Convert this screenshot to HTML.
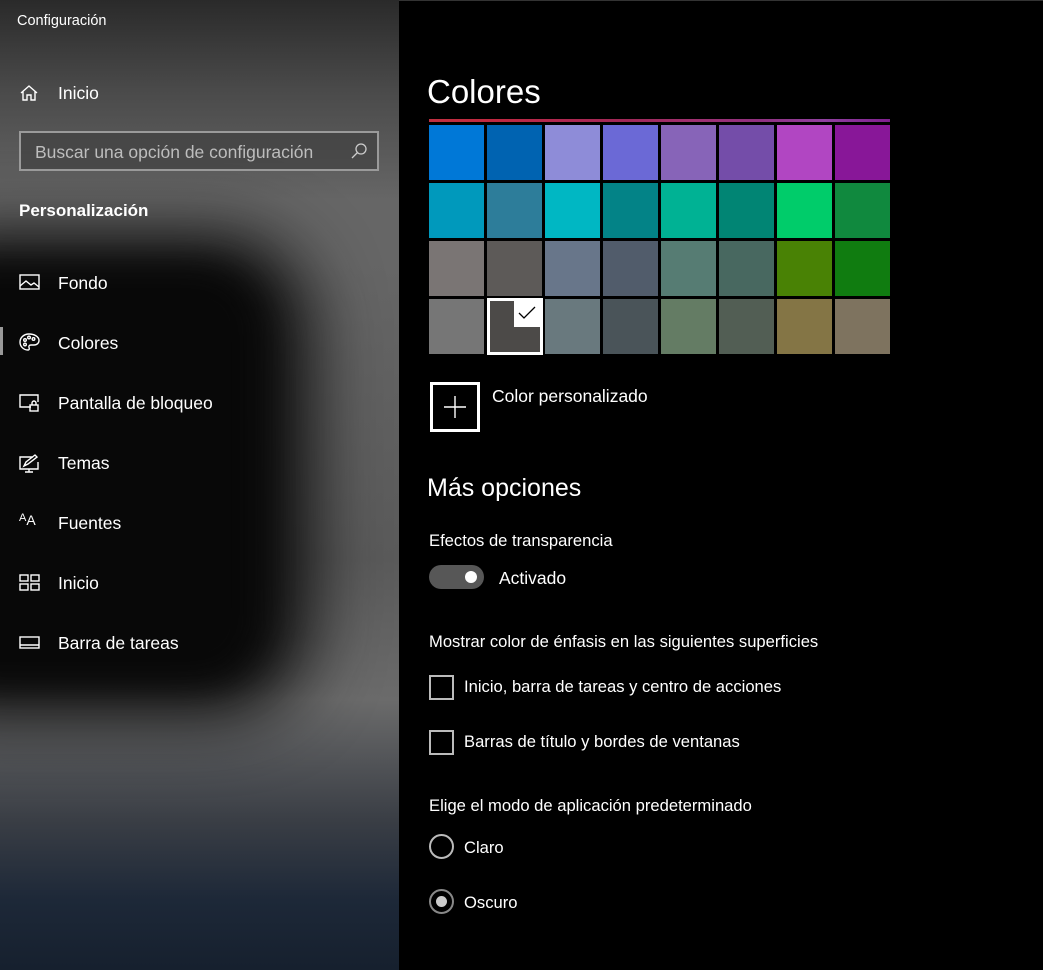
<!DOCTYPE html>
<html><head><meta charset="utf-8"><style>
*{margin:0;padding:0;box-sizing:border-box}
body{width:1043px;height:970px;overflow:hidden;background:#000;font-family:"Liberation Sans",sans-serif;color:#fff;position:relative}
#side{position:absolute;left:0;top:0;width:399px;height:970px;overflow:hidden;
background:linear-gradient(180deg,#2a2a2a 0px,#4a4a4a 90px,#666 200px,#666 260px,#5a5a5a 560px,#6b6b6b 700px,#3a3e45 820px,#1d2838 900px,#16202e 970px)}
#blob{position:absolute;left:-120px;top:235px;width:430px;height:480px;background:#0c0c0c;border-radius:90px;filter:blur(35px)}
#blob2{position:absolute;left:-80px;top:265px;width:340px;height:420px;background:#080808;border-radius:60px;filter:blur(20px)}
.t{position:absolute;white-space:nowrap}
.nav{position:absolute;left:58px;font-size:17.5px;color:#fff}
.ic{position:absolute;left:19px}
#main{position:absolute;left:399px;top:0;width:644px;height:970px;background:#000;border-top:1px solid #333}
.sw{position:absolute;width:55px;height:55px}
.lbl{position:absolute;font-size:16.6px;color:#fff;white-space:nowrap}
.cb{position:absolute;left:429px;width:25px;height:25px;border:2px solid #bbb}
.rd{position:absolute;left:429px;width:25px;height:25px;border:2px solid #bbb;border-radius:50%}
</style></head><body>
<div id="side">
<div id="blob"></div><div id="blob2"></div>
<div class="t" style="left:17px;top:13px;font-size:14.5px">Configuración</div>
<svg class="ic" style="top:83px" width="20" height="20" viewBox="0 0 20 20" fill="none" stroke="#fff" stroke-width="1.4"><path d="M2 10L10 3l8 7M4 8v9h4v-5h4v5h4V8"/></svg>
<div class="nav" style="top:83px">Inicio</div>
<div style="position:absolute;left:19px;top:131px;width:360px;height:40px;border:2px solid #9a9a9a;background:rgba(60,60,60,.6)"></div>
<div class="t" style="left:35px;top:142px;font-size:17.5px;color:#bdbdbd">Buscar una opción de configuración</div>
<svg style="position:absolute;left:350px;top:142px" width="18" height="18" viewBox="0 0 18 18" fill="none" stroke="#ccc" stroke-width="1.3"><circle cx="11" cy="7" r="5"/><path d="M7.5 10.5L2 16"/></svg>
<div class="t" style="left:19px;top:201px;font-size:17px;font-weight:bold">Personalización</div>
<svg class="ic" style="top:274px" width="21" height="17" viewBox="0 0 21 17" fill="none" stroke="#fff" stroke-width="1.4"><rect x="1" y="1" width="19" height="14"/><path d="M1 12l6-5 5 4 3-2 5 4"/></svg>
<div class="nav" style="top:273px">Fondo</div>
<div style="position:absolute;left:0;top:327px;width:3px;height:28px;background:#999"></div>
<svg class="ic" style="top:332px" width="21" height="21" viewBox="0 0 21 21" fill="none" stroke="#fff" stroke-width="1.4"><path d="M10 2C5 2 1 5.5 1 10s3.5 8 8 8c1.5 0 1.5-1.5 1-2.5s0-2.5 2-2.5h3c3 0 5-2 5-4.5C20 4.5 15 2 10 2z"/><circle cx="6" cy="8" r="1.3"/><circle cx="10" cy="5.5" r="1.3"/><circle cx="14.5" cy="7" r="1.3"/><circle cx="6" cy="12.5" r="1.3"/></svg>
<div class="nav" style="top:333px">Colores</div>
<svg class="ic" style="top:394px" width="21" height="18" viewBox="0 0 21 18" fill="none" stroke="#fff" stroke-width="1.4"><path d="M12 13H1V1h18v7"/><rect x="11" y="11" width="8" height="6"/><path d="M13 11V9a2 2 0 0 1 4 0v2"/></svg>
<div class="nav" style="top:393px">Pantalla de bloqueo</div>
<svg class="ic" style="top:454px" width="21" height="19" viewBox="0 0 21 19" fill="none" stroke="#fff" stroke-width="1.4"><path d="M14 3H1v12h18V8M6 18h8M10 15v3M5 12l2-4 9-7 2 2-9 7z"/></svg>
<div class="nav" style="top:453px">Temas</div>
<div class="t" style="left:19px;top:512px;font-size:14px"><span style="font-size:11px;vertical-align:4px">A</span>A</div>
<div class="nav" style="top:513px">Fuentes</div>
<svg class="ic" style="top:574px" width="21" height="17" viewBox="0 0 21 17" fill="none" stroke="#fff" stroke-width="1.4"><rect x="1" y="1" width="8" height="6"/><rect x="12" y="1" width="8" height="6"/><rect x="1" y="10" width="8" height="6"/><rect x="12" y="10" width="8" height="6"/></svg>
<div class="nav" style="top:573px">Inicio</div>
<svg class="ic" style="top:636px" width="21" height="13" viewBox="0 0 21 13" fill="none" stroke="#fff" stroke-width="1.4"><rect x="1" y="1" width="19" height="11"/><path d="M1 9h19"/></svg>
<div class="nav" style="top:633px">Barra de tareas</div>
</div>
<div id="main"></div>
<div class="t" style="left:427px;top:73px;font-size:33px">Colores</div>
<div style="position:absolute;left:429px;top:119px;width:461px;height:3px;background:linear-gradient(90deg,#c03040,#c02840,#b02850,#a02858,#a03070,#903080,#9040a0,#802090)"></div>
<div id="grid"></div>
<script>
var c=[["#0078d7","#0063b1","#8e8cd8","#6b69d6","#8764b8","#744da9","#b146c2","#881798"],
["#0099bc","#2d7d9a","#00b7c3","#038387","#00b294","#018574","#00cc6a","#10893e"],
["#7a7574","#5d5a58","#68768a","#515c6b","#567c73","#486860","#498205","#107c10"],
["#767676","#4c4a48","#69797e","#4a5459","#647c64","#525e54","#847545","#7e735f"]];
var h="";for(var r=0;r<4;r++)for(var k=0;k<8;k++){h+='<div class="sw" style="left:'+(429+k*58)+'px;top:'+(125+r*58)+'px;background:'+c[r][k]+'"></div>';}
document.getElementById("grid").innerHTML=h;
</script>
<div style="position:absolute;left:487px;top:298px;width:56px;height:57px;border:3px solid #fff;background:#4c4a48"></div>
<div style="position:absolute;left:514px;top:298px;width:29px;height:29px;background:#fff"></div>
<svg style="position:absolute;left:518px;top:306px" width="18" height="14" viewBox="0 0 18 14" fill="none" stroke="#000" stroke-width="1.3"><path d="M1 7l5 5L17 1"/></svg>
<div style="position:absolute;left:430px;top:382px;width:50px;height:50px;border:3px solid #fff"></div>
<svg style="position:absolute;left:443px;top:395px" width="24" height="24" viewBox="0 0 24 24" stroke="#fff" stroke-width="1.4"><path d="M12 1v22M1 12h22"/></svg>
<div class="lbl" style="left:492px;top:386px;font-size:17.5px">Color personalizado</div>
<div class="t" style="left:427px;top:474px;font-size:25px">Más opciones</div>
<div class="lbl" style="left:429px;top:531px">Efectos de transparencia</div>
<div style="position:absolute;left:429px;top:565px;width:55px;height:24px;border-radius:12px;background:#575757"></div>
<div style="position:absolute;left:465px;top:571px;width:12px;height:12px;border-radius:50%;background:#fff"></div>
<div class="lbl" style="left:499px;top:568px;font-size:17.5px">Activado</div>
<div class="lbl" style="left:429px;top:632px">Mostrar color de énfasis en las siguientes superficies</div>
<div class="cb" style="top:675px"></div>
<div class="lbl" style="left:464px;top:677px">Inicio, barra de tareas y centro de acciones</div>
<div class="cb" style="top:730px"></div>
<div class="lbl" style="left:464px;top:732px">Barras de título y bordes de ventanas</div>
<div class="lbl" style="left:429px;top:796px">Elige el modo de aplicación predeterminado</div>
<div class="rd" style="top:834px"></div>
<div class="lbl" style="left:464px;top:838px">Claro</div>
<div class="rd" style="top:889px;border-color:#888"></div>
<div style="position:absolute;left:436px;top:896px;width:11px;height:11px;border-radius:50%;background:#ccc"></div>
<div class="lbl" style="left:464px;top:893px">Oscuro</div>
</body></html>
